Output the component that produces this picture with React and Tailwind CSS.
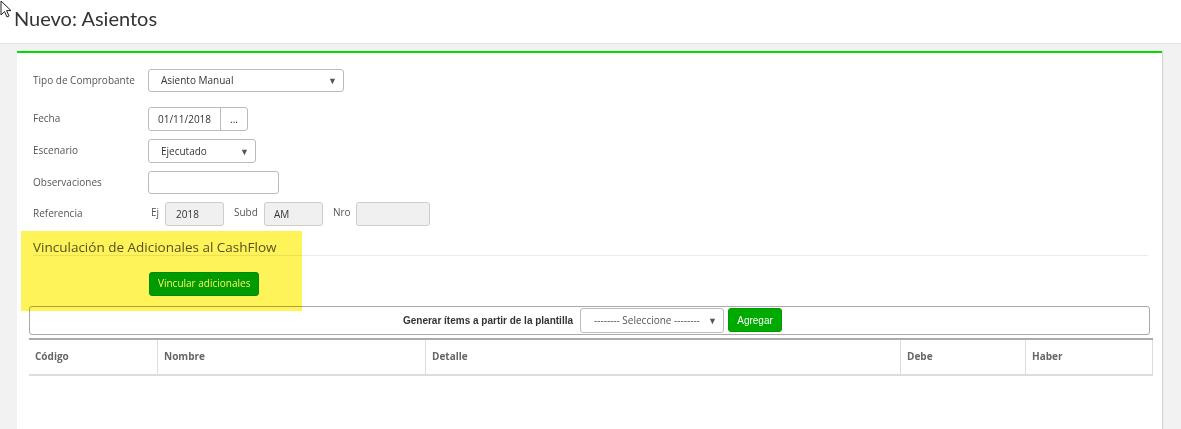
import React from 'react';

function Caret() {
  return <span className="text-[9px] text-[#555] leading-none">▼</span>;
}

function FormRow({ label, children, className = '' }) {
  return (
    <div className={`flex items-center ${className}`}>
      <div className="w-[115px] text-[10px] text-[#555] -mt-[1px]">{label}</div>
      {children}
    </div>
  );
}

export default function App() {
  const cols = [
    { name: 'Código', w: 'w-[128px]' },
    { name: 'Nombre', w: 'w-[268px]' },
    { name: 'Detalle', w: 'w-[475px]' },
    { name: 'Debe', w: 'w-[125px]' },
    { name: 'Haber', w: 'flex-1' },
  ];

  return (
    <div className="relative h-[429px] overflow-hidden bg-[#f2f2f2] font-['Open_Sans',sans-serif]">
      {/* mouse pointer */}
      <svg className="absolute left-0 top-0" width="13" height="19" viewBox="0 0 13 19">
        <path d="M1 1 L1 15 L4.5 11.5 L7 17 L9 16 L6.6 10.6 L11 10.6 Z" fill="#fff" stroke="#222" strokeWidth="1" strokeLinejoin="round" />
      </svg>

      <header className="h-[44px] bg-white border-b border-[#e6e6e6] pl-[14px] pt-[5px]">
        <h1 className="font-['Lato',sans-serif] text-[20px] text-[#333] leading-[26px]">Nuevo: Asientos</h1>
      </header>

      <div className="pl-[17px] pr-[19px] pt-[7px]">
        <div className="relative h-[400px] bg-white border-t-2 border-[#00dd00] shadow-[1px_0_1px_rgba(0,0,0,0.12)] px-[12px]">
          <div className="pl-[4px] pt-[16px]">
            <FormRow label="Tipo de Comprobante">
              <div className="w-[196px] h-[23px] border border-[#bbb] rounded-[3px] flex items-center justify-between pl-[12px] pr-[6px] text-[10px] text-[#333]">
                <span>Asiento Manual</span>
                <Caret />
              </div>
            </FormRow>

            <FormRow label="Fecha" className="mt-[15px]">
              <div className="flex h-[24px] border border-[#bbb] rounded-[3px] text-[10px] text-[#333]">
                <div className="w-[72px] flex items-center justify-center border-r border-[#bbb]">01/11/2018</div>
                <div className="w-[26px] flex items-center justify-center">...</div>
              </div>
            </FormRow>

            <FormRow label="Escenario" className="mt-[8px]">
              <div className="w-[108px] h-[24px] border border-[#bbb] rounded-[3px] flex items-center justify-between pl-[12px] pr-[6px] text-[10px] text-[#333]">
                <span>Ejecutado</span>
                <Caret />
              </div>
            </FormRow>

            <FormRow label="Observaciones" className="mt-[8px]">
              <div className="w-[131px] h-[23px] border border-[#bbb] rounded-[3px]" />
            </FormRow>

            <FormRow label="Referencia" className="mt-[8px]">
              <div className="flex items-center text-[10px] text-[#555]">
                <span className="ml-[3px] w-[14px] -mt-[3px]">Ej</span>
                <div className="w-[59px] h-[24px] bg-[#f0f0f0] border border-[#ccc] rounded-[3px] flex items-center pl-[10px] text-[#333]">2018</div>
                <span className="ml-[10px] w-[30px] -mt-[3px]">Subd</span>
                <div className="w-[59px] h-[24px] bg-[#f0f0f0] border border-[#ccc] rounded-[3px] flex items-center pl-[9px] text-[#333]">AM</div>
                <span className="ml-[10px] w-[23px] -mt-[3px]">Nro</span>
                <div className="w-[74px] h-[24px] bg-[#f0f0f0] border border-[#ccc] rounded-[3px]" />
              </div>
            </FormRow>

            <div className="mt-[10px] pr-[2px]">
              <h2 className="text-[13.5px] text-[#555] leading-[15px] pt-[4px] pb-0 border-b border-[#ebebeb]">
                Vinculación de Adicionales al CashFlow
              </h2>
              <div className="pl-[116px] pt-[13px]">
                <button className="h-[24px] px-[8px] bg-[#00a300] border border-[#009200] rounded-[3px] text-white text-[10px]">
                  Vincular adicionales
                </button>
              </div>
            </div>
          </div>

          <div className="mt-[10px] h-[29px] border border-[#aaa] rounded-[3px] flex items-center justify-center gap-[7px] pl-[6px]">
            <span className="font-['Liberation_Sans',Arial,sans-serif] text-[10px] font-bold text-[#333]">Generar ítems a partir de la plantilla</span>
            <div className="flex items-center gap-[4px]">
              <div className="w-[144px] h-[25px] border border-[#bbb] rounded-[3px] flex items-center justify-between pl-[13px] pr-[6px] text-[10px] text-[#555]">
                <span>-------- Seleccione --------</span>
                <Caret />
              </div>
              <button className="w-[54px] h-[24px] bg-[#00aa00] border border-[#009900] rounded-[3px] text-white text-[10px] font-['Liberation_Sans',Arial,sans-serif]">
                Agregar
              </button>
            </div>
          </div>

          <div className="mt-[3px] mr-[-3px] border-t-[2px] border-[#aaa]">
            <div className="flex h-[36px] border-b-[2px] border-[#ddd] border-r border-r-[#ddd]">
              {cols.map((c, i) => (
                <div
                  key={c.name}
                  className={`${c.w} flex items-center pl-[6px] text-[10px] font-bold text-[#666] ${i > 0 ? 'border-l border-[#ddd]' : ''}`}
                >
                  {c.name}
                </div>
              ))}
            </div>
          </div>

          {/* highlight */}
          <div className="absolute left-[4px] top-[178px] w-[281px] h-[80px] bg-[#fff35a] mix-blend-multiply pointer-events-none" />
        </div>
      </div>
    </div>
  );
}
